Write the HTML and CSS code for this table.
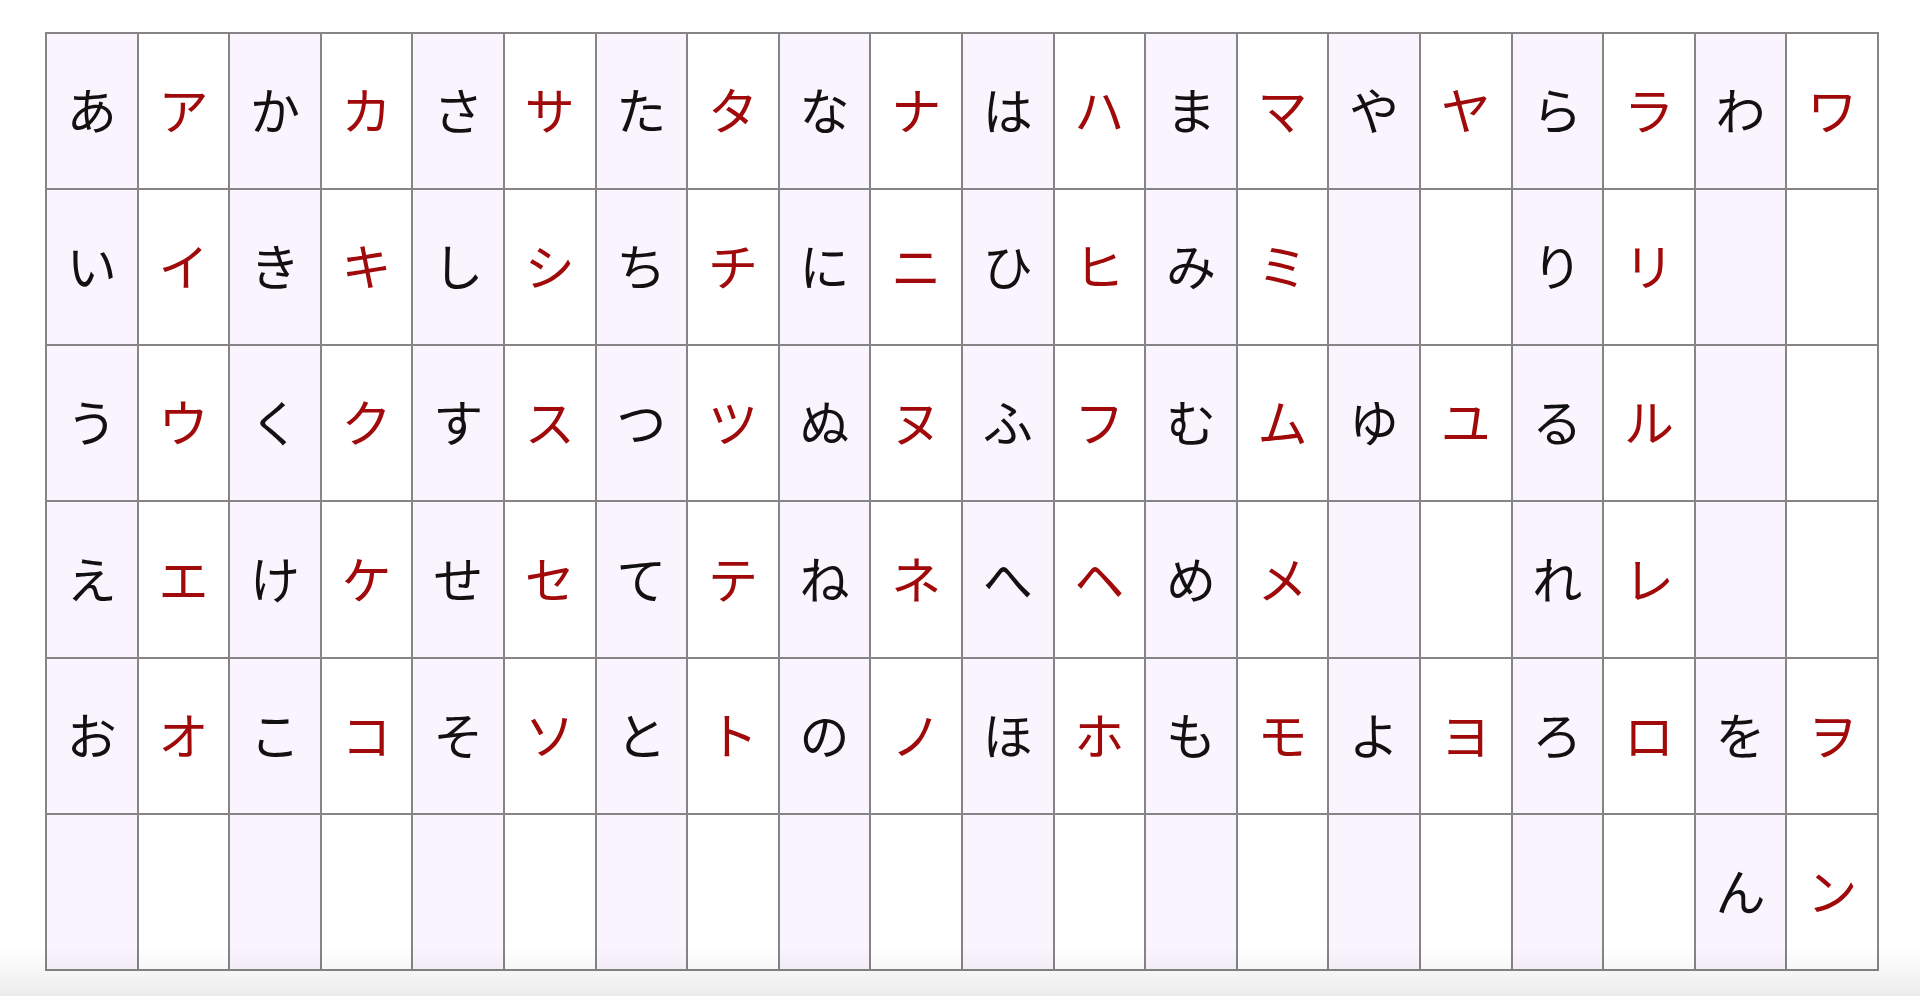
FILE: index.html
```html
<!DOCTYPE html>
<html lang="ja">
<head>
<meta charset="utf-8">
<title>Kana</title>
<link rel="stylesheet" href="styles.css">
</head>
<body>
<main class="page">
<table class="kana">
<tr><td class="h">あ</td><td class="k">ア</td><td class="h">か</td><td class="k">カ</td><td class="h">さ</td><td class="k">サ</td><td class="h">た</td><td class="k">タ</td><td class="h">な</td><td class="k">ナ</td><td class="h">は</td><td class="k">ハ</td><td class="h">ま</td><td class="k">マ</td><td class="h">や</td><td class="k">ヤ</td><td class="h">ら</td><td class="k">ラ</td><td class="h">わ</td><td class="k">ワ</td></tr>
<tr><td class="h">い</td><td class="k">イ</td><td class="h">き</td><td class="k">キ</td><td class="h">し</td><td class="k">シ</td><td class="h">ち</td><td class="k">チ</td><td class="h">に</td><td class="k">ニ</td><td class="h">ひ</td><td class="k">ヒ</td><td class="h">み</td><td class="k">ミ</td><td class="h"></td><td class="k"></td><td class="h">り</td><td class="k">リ</td><td class="h"></td><td class="k"></td></tr>
<tr><td class="h">う</td><td class="k">ウ</td><td class="h">く</td><td class="k">ク</td><td class="h">す</td><td class="k">ス</td><td class="h">つ</td><td class="k">ツ</td><td class="h">ぬ</td><td class="k">ヌ</td><td class="h">ふ</td><td class="k">フ</td><td class="h">む</td><td class="k">ム</td><td class="h">ゆ</td><td class="k">ユ</td><td class="h">る</td><td class="k">ル</td><td class="h"></td><td class="k"></td></tr>
<tr><td class="h">え</td><td class="k">エ</td><td class="h">け</td><td class="k">ケ</td><td class="h">せ</td><td class="k">セ</td><td class="h">て</td><td class="k">テ</td><td class="h">ね</td><td class="k">ネ</td><td class="h">へ</td><td class="k">ヘ</td><td class="h">め</td><td class="k">メ</td><td class="h"></td><td class="k"></td><td class="h">れ</td><td class="k">レ</td><td class="h"></td><td class="k"></td></tr>
<tr><td class="h">お</td><td class="k">オ</td><td class="h">こ</td><td class="k">コ</td><td class="h">そ</td><td class="k">ソ</td><td class="h">と</td><td class="k">ト</td><td class="h">の</td><td class="k">ノ</td><td class="h">ほ</td><td class="k">ホ</td><td class="h">も</td><td class="k">モ</td><td class="h">よ</td><td class="k">ヨ</td><td class="h">ろ</td><td class="k">ロ</td><td class="h">を</td><td class="k">ヲ</td></tr>
<tr><td class="h"></td><td class="k"></td><td class="h"></td><td class="k"></td><td class="h"></td><td class="k"></td><td class="h"></td><td class="k"></td><td class="h"></td><td class="k"></td><td class="h"></td><td class="k"></td><td class="h"></td><td class="k"></td><td class="h"></td><td class="k"></td><td class="h"></td><td class="k"></td><td class="h">ん</td><td class="k">ン</td></tr>
</table>
</main>
<div class="shade"></div>
</body>
</html>
```
FILE: styles.css
```css
html, body {
  margin: 0;
  padding: 0;
  background: #ffffff;
  overflow: hidden;
}
.page {
  padding: 32px 0 0 45px;
  height: 996px;
  box-sizing: border-box;
}
.kana {
  border-collapse: collapse;
  table-layout: fixed;
  width: 1834px;
  height: 939px;
  font-family: "Noto Sans CJK JP", "Noto Sans", sans-serif;
  font-size: 50px;
  font-weight: 400;
}
.kana td {
  border: 2px solid #858585;
  text-align: center;
  vertical-align: middle;
  padding: 0 0 6px 0;
  line-height: 1;
}
.kana td.h {
  background: #f9f4fd;
  color: #111111;
}
.kana td.k {
  background: #ffffff;
  color: #a10a0a;
}
.shade {
  position: fixed;
  left: 0;
  right: 0;
  bottom: 0;
  height: 50px;
  background: linear-gradient(to bottom, rgba(0,0,0,0) 0%, rgba(0,0,0,0.03) 50%, rgba(0,0,0,0.08) 100%);
  pointer-events: none;
}
```
